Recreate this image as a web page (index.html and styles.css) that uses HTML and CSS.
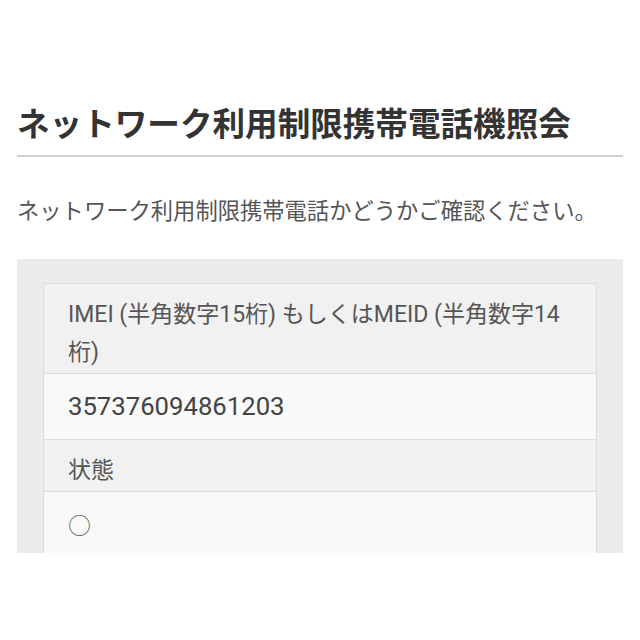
FILE: index.html
```html
<!DOCTYPE html>
<html lang="ja">

<head>
    <meta charset="UTF-8">
    <meta name="viewport" content="width=device-width, initial-scale=1.0">
    <title>ネットワーク利用制限携帯電話機照会</title>
    <link rel="stylesheet" href="styles.css">
</head>

<body>
    <div class="page">
        <h1 class="title">ネットワーク利用制限携帯電話機照会</h1>

        <p class="lead">ネットワーク利用制限携帯電話かどうかご確認ください。</p>

        <div class="panel">
            <dl class="result">
                <dt class="label">IMEI (半角数字15桁) もしくはMEID (半角数字14桁)</dt>
                <dd class="value number">357376094861203</dd>
                <dt class="label">状態</dt>
                <dd class="value"><span class="mark">○</span></dd>
            </dl>
        </div>
    </div>
</body>
</html>
```

FILE: styles.css
```css
body {
    margin: 0;
    background-color: #fff;
    font-family: Roboto, "Noto Sans CJK JP", sans-serif;
    color: #555;
}

.page {
    padding: 0 17px;
}

.title {
    margin: 103px 0 0;
    padding-bottom: 8px;
    border-bottom: 2px solid #d2d2d2;
    font-size: 32.6px;
    line-height: 44px;
    font-weight: 700;
    color: #333;
}

.lead {
    margin: 38px 0 0;
    font-size: 22.3px;
    line-height: 32px;
    color: #555;
}

.panel {
    margin-top: 32px;
    height: 270px;
    padding: 24px 26px 0;
    background-color: #ebebeb;
    overflow: hidden;
}

.result {
    margin: 0;
    border: 1px solid #dcdcdc;
}

.label {
    padding: 12px 24px 1px;
    background-color: #f1f1f1;
    border-bottom: 1px solid #dcdcdc;
    font-size: 23px;
    line-height: 38px;
    color: #555;
}

.value {
    margin: 0;
    padding: 13px 24px 14px;
    background-color: #f9f9f9;
    border-bottom: 1px solid #dcdcdc;
    line-height: 38px;
    color: #444;
}

.number {
    font-size: 25.7px;
}

.mark {
    font-family: "Noto Sans CJK JP", sans-serif;
    font-size: 23px;
    color: #666;
}
```
